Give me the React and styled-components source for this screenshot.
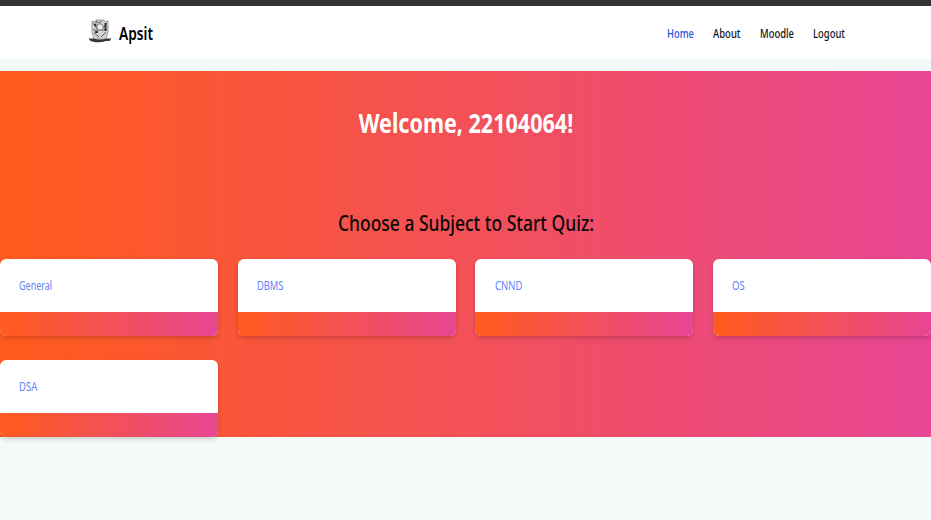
import React from 'react';
import styled, { createGlobalStyle } from 'styled-components';

const GlobalStyle = createGlobalStyle`
  * { box-sizing: border-box; }
  body { margin: 0; background: #f3faf7; font-family: "Noto Sans", "Open Sans", sans-serif; overflow: hidden; }
  h1, h2, p { margin: 0; }
`;

const Page = styled.div`
  height: 520px;
  border-top: 6px solid #343233;
`;

const Navbar = styled.header`
  height: 53px;
  margin-bottom: 12px;
  padding: 0 86px 0 88px;
  display: flex;
  align-items: center;
  justify-content: space-between;
  background: #fff;
`;

const Brand = styled.a`
  display: flex;
  align-items: center;
  gap: 7px;
  height: 53px;
`;

const Crest = styled.svg`
  width: 24px;
  height: 26px;
  margin-top: -3px;
`;

const Label = styled.span`
  display: inline-block;
  white-space: nowrap;
  transform: scaleX(${(p) => p.$narrow});
  transform-origin: ${(p) => p.$origin || 'left'} center;
`;

const BrandName = styled.span`
  width: 40px;
  font-size: 17.5px;
  font-weight: 600;
  line-height: 24px;
  padding-top: 1px;
  color: #000;
`;

const Links = styled.nav`
  display: flex;
  padding-top: 2px;
`;

const Link = styled.a`
  width: ${(p) => p.$width}px;
  font-size: 12px;
  font-weight: 500;
  line-height: 16px;
  color: ${(p) => (p.$active ? '#1c56d8' : '#111317')};
`;

const Hero = styled.main`
  height: 366px;
  background: linear-gradient(90deg, #ff5a1f 3%, #e74694);
`;

const Welcome = styled.h1`
  padding-top: 34px;
  height: 134px;
  font-size: 26.5px;
  line-height: 36px;
  font-weight: 700;
  text-align: center;
  color: #fff;
`;

const Prompt = styled.h2`
  height: 53.5px;
  font-size: 22.5px;
  line-height: 36px;
  font-weight: 500;
  text-align: center;
  color: #0b0808;
`;

const Subjects = styled.section`
  display: grid;
  grid-template-columns: repeat(4, 218.3px);
  column-gap: 19.3px;
  row-gap: 23.5px;
`;

const Card = styled.article`
  height: 77.5px;
  border-radius: 6px;
  overflow: hidden;
  background: #fff;
  box-shadow: 0 3px 5px rgba(0, 0, 0, 0.12), 0 1px 3px rgba(0, 0, 0, 0.06);
`;

const CardBody = styled.div`
  height: 53.5px;
  padding: 18.4px 19.4px 0;
  font-size: 12px;
  line-height: 18px;
  color: #5b83f7;
`;

const CardFooter = styled.div`
  height: 24px;
  background: linear-gradient(90deg, #ff5a1f 3%, #e74694);
`;

const links = [
  { text: 'Home', width: 46, narrow: 0.775, active: true },
  { text: 'About', width: 46.5, narrow: 0.79 },
  { text: 'Moodle', width: 53.5, narrow: 0.785 },
  { text: 'Logout', width: 32, narrow: 0.785 },
];

const subjects = [
  { name: 'General', narrow: 0.75 },
  { name: 'DBMS', narrow: 0.775 },
  { name: 'CNND', narrow: 0.79 },
  { name: 'OS', narrow: 0.79 },
  { name: 'DSA', narrow: 0.8 },
];

function CollegeCrest() {
  return (
    <Crest viewBox="0 0 24 26" aria-hidden="true">
      <path d="M4 3 L7 4 L8 2 L16 2 L17 4 L20 3 V14 L18 21 H6 L4 14Z" fill="#d4d4d4" stroke="#858585" strokeWidth=".8" />
      <path d="M5 5 L10 12 M19 5 L13 12 M5 12 H19 M8 4 V9 M6 15 L11 19 M18 14 L13 19 M8 3 L11 5 L14 3" stroke="#606060" strokeWidth="1" fill="none" />
      <circle cx="12" cy="9" r="3.2" fill="#eee" stroke="#666" strokeWidth=".8" />
      <path d="M16.5 5h2v8h-2z M7 13h3v2H7z M6 6h2v2H6z" fill="#333" />
      <path d="M0.5 20.5 H5 Q12 22.5 19 20.5 H23.5 L21.5 23 H18 Q12 25 6 24 L2.5 23Z" fill="#363636" />
    </Crest>
  );
}

export default function App() {
  return (
    <Page>
      <GlobalStyle />
      <Navbar>
        <Brand>
          <CollegeCrest />
          <BrandName><Label $narrow={0.785}>Apsit</Label></BrandName>
        </Brand>
        <Links>
          {links.map((l) => (
            <Link key={l.text} $width={l.width} $active={l.active}>
              <Label $narrow={l.narrow}>{l.text}</Label>
            </Link>
          ))}
        </Links>
      </Navbar>
      <Hero>
        <Welcome><Label $narrow={0.813} $origin="center">Welcome, 22104064!</Label></Welcome>
        <Prompt><Label $narrow={0.776} $origin="center">Choose a Subject to Start Quiz:</Label></Prompt>
        <Subjects>
          {subjects.map((s) => (
            <Card key={s.name}>
              <CardBody><Label $narrow={s.narrow}>{s.name}</Label></CardBody>
              <CardFooter />
            </Card>
          ))}
        </Subjects>
      </Hero>
    </Page>
  );
}
